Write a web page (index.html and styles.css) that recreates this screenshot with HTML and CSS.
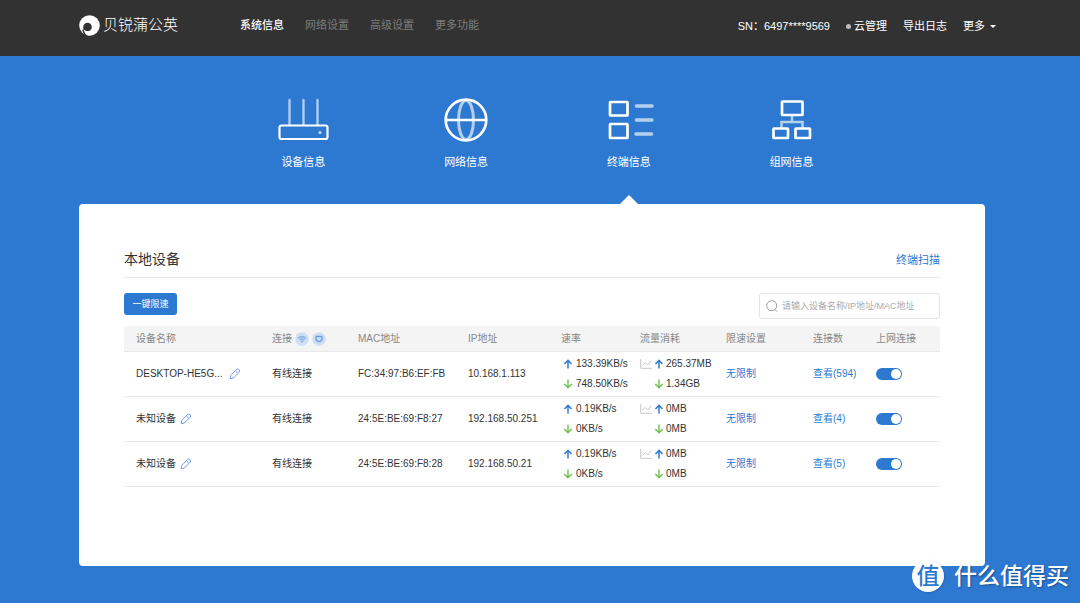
FILE: index.html
```html
<!DOCTYPE html>
<html lang="zh-CN">
<head>
<meta charset="utf-8">
<meta name="viewport" content="width=device-width, initial-scale=1">
<title>终端信息</title>
<link rel="stylesheet" href="styles.css">
</head>
<body>
<svg class="sprite" aria-hidden="true">
  <symbol id="up" viewBox="0 0 10 10"><path d="M5 9.500V1.500M1.500 5L5 1.300 8.500 5" fill="none" stroke="#2d79d1" stroke-width="1.500"/></symbol>
  <symbol id="down" viewBox="0 0 10 10"><path d="M5 .5v8M1.300 5L5 8.700 8.700 5" fill="none" stroke="#6cc24a" stroke-width="1.400"/></symbol>
  <symbol id="chart" viewBox="0 0 12 10"><path d="M.7 0v9.300H12M2.500 6.500l2.800-3 2.500 2.500L11.300 1.500" fill="none" stroke="#c8c8c8"/></symbol>
  <symbol id="pen" viewBox="0 0 12 12"><path d="M1.200 10.800L1.700 7.500 7.500 1.600q1.300-1.100 2.500 0t.1 2.600L4.400 10zM6.700 3.300L8.700 5.200" fill="none" stroke="#6f9cf0" stroke-width="1" stroke-linejoin="round"/></symbol>
</svg>
<header class="topbar">
  <div class="topbar-inner">
    <a class="brand" href="#">
      <svg class="brand-mark" viewBox="0 0 21 21" aria-hidden="true"><circle cx="10.500" cy="10.500" r="10.300" fill="#fff"/><circle cx="8.500" cy="12" r="4.300" fill="#323232"/><path d="M4.500 13Q4.500 17.500 8.500 21L6 20.500Q4 18.500 3.300 15.500z" fill="#323232"/><path d="M8.200 16.300Q7 16.500 6.200 16 7 19 10 20.800L12 16z" fill="#fff"/></svg>
      <span>贝锐蒲公英</span>
    </a>
    <nav class="menu">
      <a class="menu-on" href="#">系统信息</a>
      <a href="#">网络设置</a>
      <a href="#">高级设置</a>
      <a href="#">更多功能</a>
    </nav>
    <div class="tools">
      <span>SN：6497****9569</span>
      <a class="cloud" href="#">云管理</a>
      <a href="#">导出日志</a>
      <button class="more" type="button">更多</button>
    </div>
  </div>
</header>
<main class="page">
  <nav class="tabs">
    <a class="tab" href="#">
      <svg class="tab-icon" viewBox="0 0 52 46" fill="none" stroke="#fff" aria-hidden="true"><g stroke-width="2.300" stroke-linecap="round" opacity=".65"><path d="M12.500 3v25M26.500 3v25M40.500 3v25"/></g><rect x="2.500" y="28.500" width="48" height="13.500" rx="2" stroke-width="2.200"/><circle cx="43" cy="35.500" r="1.500" fill="#fff" stroke="none" opacity=".75"/></svg>
      设备信息
    </a>
    <a class="tab" href="#">
      <svg class="tab-icon" viewBox="0 0 52 46" fill="none" stroke="#fff" aria-hidden="true"><ellipse cx="26" cy="23" rx="7.500" ry="19.500" stroke-width="3" opacity=".65"/><path d="M5 23h42" stroke-width="2.500"/><circle cx="26" cy="23" r="20.300" stroke-width="2.700"/></svg>
      网络信息
    </a>
    <a class="tab tab-on" href="#">
      <svg class="tab-icon" viewBox="0 0 52 46" fill="none" stroke="#fff" aria-hidden="true"><g stroke-width="2.700"><rect x="7" y="5" width="17.500" height="13.500" rx=".5"/><rect x="7" y="27" width="17.500" height="14" rx=".5"/></g><path d="M33.500 9h15.500M33.500 23h15.500M33 37h15.500" stroke-width="3.500" stroke-linecap="round" opacity=".65"/></svg>
      终端信息
    </a>
    <a class="tab" href="#">
      <svg class="tab-icon" viewBox="0 0 52 46" fill="none" stroke="#fff" aria-hidden="true"><path d="M26 19v6M15.500 32v-7h21v7" stroke-width="2.500" opacity=".65"/><g stroke-width="2.700"><rect x="16" y="4.500" width="20.500" height="13.500" rx=".5"/><rect x="7.500" y="31.500" width="14.500" height="9.500" rx=".5"/><rect x="29.500" y="31.500" width="14.500" height="9.500" rx=".5"/></g></svg>
      组网信息
    </a>
  </nav>
  <section class="panel">
    <div class="panel-head">
      <h1>本地设备</h1>
      <a href="#">终端扫描</a>
    </div>
    <div class="actions">
      <button class="limit" type="button">一键限速</button>
      <label class="search">
        <svg class="search-icon" viewBox="0 0 12 12" fill="none" stroke="#999" aria-hidden="true"><circle cx="5.700" cy="5.700" r="5"/><path d="M9 9.500l2 2"/></svg>
        <input type="text" aria-label="搜索设备" placeholder="请输入设备名称/IP地址/MAC地址">
      </label>
    </div>
    <table class="devices">
      <colgroup><col class="c-name"><col class="c-link"><col class="c-mac"><col class="c-ip"><col class="c-rate"><col class="c-flow"><col class="c-limit"><col class="c-count"><col class="c-net"></colgroup>
      <thead>
        <tr>
          <th>设备名称</th>
          <th><div class="line">连接
            <svg class="badge" viewBox="0 0 14 14" aria-hidden="true"><circle cx="7" cy="7" r="6.800" fill="#cfdff2"/><path d="M2.500 5.700Q7 2 11.500 5.700L7 11z" fill="#8db5e6"/><path d="M3.800 7.200Q7 4.500 10.200 7.200M5.200 8.800Q7 7.400 8.800 8.800" fill="none" stroke="#cfdff2" stroke-width=".6"/></svg>
            <svg class="badge" viewBox="0 0 14 14" aria-hidden="true"><circle cx="7" cy="7" r="6.800" fill="#cfdff2"/><path d="M4 4.500h6v3.700H9l-.8 1.300H5.800L5 8.200H4z" fill="none" stroke="#6a9fe0" stroke-width="1.300" stroke-linejoin="round"/></svg></div></th>
          <th>MAC地址</th>
          <th>IP地址</th>
          <th>速率</th>
          <th>流量消耗</th>
          <th>限速设置</th>
          <th>连接数</th>
          <th>上网连接</th>
        </tr>
      </thead>
      <tbody>
        <tr>
          <td><div class="line name"><span class="name-long">DESKTOP-HE5G...</span><button class="edit" type="button" aria-label="编辑名称"><svg class="pen"><use href="#pen"/></svg></button></div></td>
          <td>有线连接</td><td>FC:34:97:B6:EF:FB</td><td>10.168.1.113</td>
          <td><div class="pair rate"><svg class="arrow"><use href="#up"/></svg><span>133.39KB/s</span><svg class="arrow"><use href="#down"/></svg><span>748.50KB/s</span></div></td>
          <td><div class="pair flow"><svg class="chart"><use href="#chart"/></svg><svg class="arrow"><use href="#up"/></svg><span>265.37MB</span><i></i><svg class="arrow"><use href="#down"/></svg><span>1.34GB</span></div></td>
          <td><a href="#">无限制</a></td><td><a href="#">查看(594)</a></td>
          <td><input class="switch" type="checkbox" aria-label="上网连接" checked></td>
        </tr>
        <tr>
          <td><div class="line name"><span>未知设备</span><button class="edit" type="button" aria-label="编辑名称"><svg class="pen"><use href="#pen"/></svg></button></div></td>
          <td>有线连接</td><td>24:5E:BE:69:F8:27</td><td>192.168.50.251</td>
          <td><div class="pair rate"><svg class="arrow"><use href="#up"/></svg><span>0.19KB/s</span><svg class="arrow"><use href="#down"/></svg><span>0KB/s</span></div></td>
          <td><div class="pair flow"><svg class="chart"><use href="#chart"/></svg><svg class="arrow"><use href="#up"/></svg><span>0MB</span><i></i><svg class="arrow"><use href="#down"/></svg><span>0MB</span></div></td>
          <td><a href="#">无限制</a></td><td><a href="#">查看(4)</a></td>
          <td><input class="switch" type="checkbox" aria-label="上网连接" checked></td>
        </tr>
        <tr>
          <td><div class="line name"><span>未知设备</span><button class="edit" type="button" aria-label="编辑名称"><svg class="pen"><use href="#pen"/></svg></button></div></td>
          <td>有线连接</td><td>24:5E:BE:69:F8:28</td><td>192.168.50.21</td>
          <td><div class="pair rate"><svg class="arrow"><use href="#up"/></svg><span>0.19KB/s</span><svg class="arrow"><use href="#down"/></svg><span>0KB/s</span></div></td>
          <td><div class="pair flow"><svg class="chart"><use href="#chart"/></svg><svg class="arrow"><use href="#up"/></svg><span>0MB</span><i></i><svg class="arrow"><use href="#down"/></svg><span>0MB</span></div></td>
          <td><a href="#">无限制</a></td><td><a href="#">查看(5)</a></td>
          <td><input class="switch" type="checkbox" aria-label="上网连接" checked></td>
        </tr>
      </tbody>
    </table>
  </section>
</main>
<div class="watermark"><span class="seal">值</span><span>什么值得买</span></div>
</body>
</html>
```

FILE: styles.css
```css
* { box-sizing: border-box; }

body {
  position: relative;
  min-height: 100vh;
  margin: 0;
  background: #2d79d1;
  color: #333;
  font: 10px/20px "Liberation Sans", "Noto Sans CJK SC", sans-serif;
}

a { color: #2d79d1; text-decoration: none; }
button { padding: 0; border: 0; background: none; color: inherit; font: inherit; cursor: pointer; }
.sprite { position: absolute; width: 0; height: 0; }

.topbar { padding: 0 84px 0 79px; background: #323232; }
.topbar-inner { display: flex; align-items: center; max-width: 1210px; height: 56px; margin: 0 auto; padding-bottom: 6px; color: #fff; font-size: 11px; }
.topbar a { color: inherit; }
.topbar .brand { display: flex; align-items: center; gap: 3px; width: 161px; font-size: 15px; font-weight: 300; }
.brand-mark { width: 21px; height: 21px; }
.menu { display: flex; gap: 21px; }
.topbar .menu a { color: #7d7d7d; }
.topbar .menu .menu-on { color: #fff; font-weight: 500; }
.tools { display: flex; align-items: center; gap: 16px; margin-left: auto; padding-top: 2px; }
.cloud { display: flex; align-items: center; gap: 3px; }
.cloud::before { width: 5px; height: 5px; border-radius: 50%; background: #bbb; content: ""; }
.more { display: flex; align-items: center; gap: 5px; }
.more::after { border: 3px solid transparent; border-top-color: #fff; border-bottom: 0; content: ""; }

.page { max-width: 1373px; margin: 0 auto; padding: 41px 95px 37px 79px; }
.tabs { display: grid; grid-template-columns: repeat(4, 1fr); padding: 0 112px 0 143px; }
.tab { position: relative; display: flex; flex-direction: column; align-items: center; height: 107px; color: #fff; font-size: 11px; }
.tab-icon { width: 52px; height: 46px; margin-bottom: 9px; }
.tab-on::after { position: absolute; bottom: 0; border: 9px solid transparent; border-top: 0; border-bottom-color: #fff; content: ""; }

.panel { min-height: 362px; padding: 44px 45px; border-radius: 4px; background: #fff; }
.panel-head { display: flex; align-items: flex-end; justify-content: space-between; height: 30px; padding-bottom: 7px; border-bottom: 1px solid #e6e6e6; font-size: 11px; line-height: 20px; }
.panel-head h1 { margin: 0; font-size: 14px; font-weight: 400; line-height: 22px; }
.actions { display: flex; align-items: flex-start; justify-content: space-between; padding: 15px 0 7px; }
.limit { width: 53px; height: 22px; border-radius: 3px; background: #2d79d1; color: #fff; font-size: 9px; }
.search { display: flex; align-items: center; gap: 4px; width: 181px; height: 26px; padding: 0 6px; border: 1px solid #e4e4e4; border-radius: 3px; }
.search-icon { flex: none; width: 12px; height: 12px; }
.search input { flex: 1; min-width: 0; padding: 0; border: 0; outline: 0; background: none; color: #333; font: inherit; font-size: 9px; }
.search input::placeholder { color: #aaa; }

.devices { width: 100%; border-collapse: collapse; table-layout: fixed; }
.c-name { width: 148px; }
.c-link { width: 86px; }
.c-mac { width: 110px; }
.c-ip { width: 93px; }
.c-rate { width: 79px; }
.c-flow { width: 86px; }
.c-limit { width: 87px; }
.c-count { width: 63px; }
.c-net { width: 64px; }
.devices th, .devices td { padding: 0; border-bottom: 1px solid #e8e8e8; text-align: left; vertical-align: middle; white-space: nowrap; }
.devices th { height: 25px; padding-top: 2px; background: #f4f4f4; color: #888; font-weight: 400; }
.devices td { height: 45px; }
.devices th:first-child, .devices td:first-child { padding-left: 12px; }
.line { display: flex; align-items: center; gap: 3px; }
.name { gap: 4px; }
.badge { width: 14px; height: 14px; }
.name-long { width: 89px; }
.edit { display: flex; }
.pen { width: 12px; height: 12px; }
.pair { display: grid; align-items: center; column-gap: 3px; }
.rate { grid-template-columns: 10px 1fr; padding-left: 2px; }
.flow { grid-template-columns: 12px 10px 1fr; column-gap: 2px; }
.arrow { width: 10px; height: 10px; }
.chart { width: 12px; height: 10px; }
.switch { display: flex; align-items: center; justify-content: flex-end; width: 26px; height: 12px; margin: 0; padding: 0 1px; border-radius: 6px; background: #2d79d1; appearance: none; }
.switch::after { width: 10px; height: 10px; border-radius: 50%; background: #fff; content: ""; }
.switch:not(:checked) { justify-content: flex-start; background: #ccc; }

.watermark { position: absolute; right: 11px; bottom: 11px; display: flex; align-items: center; gap: 10px; color: #fff; font-size: 23px; font-weight: 500; line-height: 32px; text-shadow: 1px 1px 2px #1b4f91; }
.seal { width: 32px; height: 32px; border-radius: 50%; background: #fff; box-shadow: 1px 1px 2px #1b4f9166; color: #2d79d1; text-align: center; text-shadow: none; }
```
